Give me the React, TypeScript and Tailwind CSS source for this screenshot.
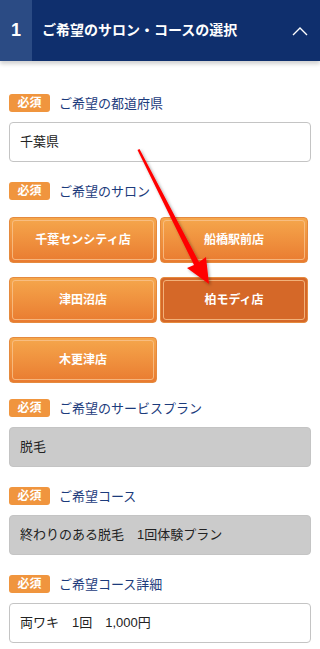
import React from 'react';

const FONT = { fontFamily: '"Liberation Sans", "Noto Sans CJK JP", "Noto Sans", sans-serif' };

function Label({ text }: { text: string }) {
  return (
    <div className="flex items-center gap-[9px] h-[18px]">
      <span className="inline-flex items-center justify-center w-[41px] h-[18px] rounded-[3px] bg-[#f0953e] text-white text-[12px] font-bold leading-none">
        必須
      </span>
      <span className="text-[13px] text-[#1c3b7c] leading-none">{text}</span>
    </div>
  );
}

function Field({ value, gray }: { value: string; gray?: boolean }) {
  return (
    <div
      className={`h-[40px] flex items-center px-[10px] rounded-[4px] border border-[#c4c4c4] text-[13px] text-[#222] ${
        gray ? 'bg-[#cbcbcb]' : 'bg-white'
      }`}
    >
      {value}
    </div>
  );
}

function Shop({ name, active }: { name: string; active?: boolean }) {
  return (
    <div
      className={`h-[46px] rounded-[4px] p-[2px] border border-[#e58a3e] ${
        active ? 'bg-[#d56828]' : 'bg-gradient-to-b from-[#f5a74c] to-[#e97b30]'
      }`}
    >
      <div className="h-full rounded-[3px] border border-[#f9c38d]/80 flex items-center justify-center text-white text-[12px] font-bold">
        {name}
      </div>
    </div>
  );
}

export default function App() {
  return (
    <div className="relative w-[320px] bg-white" style={FONT}>
      <div className="flex h-[61px] bg-[#0f2f6d] shadow-[0_3px_4px_rgba(0,0,0,0.18)]">
        <div className="w-[32px] bg-[#2b4b84] flex items-center justify-center text-white text-[18px] font-bold">1</div>
        <div className="flex-1 flex items-center pl-[10px] text-white text-[14px] font-bold">
          ご希望のサロン・コースの選択
        </div>
        <div className="w-[40px] flex items-center justify-center">
          <svg width="16" height="10" viewBox="0 0 16 10">
            <path d="M1 9 L8 2 L15 9" fill="none" stroke="white" strokeWidth="1.4" />
          </svg>
        </div>
      </div>

      <div className="px-[9px] pt-[33px] pb-[6px] flex flex-col">
        <Label text="ご希望の都道府県" />
        <div className="mt-[10px]">
          <Field value="千葉県" />
        </div>

        <div className="mt-[20px]">
          <Label text="ご希望のサロン" />
        </div>
        <div className="mt-[17px] grid grid-cols-2 gap-x-[3px] gap-y-[14px] w-[299px]">
          <Shop name="千葉センシティ店" />
          <Shop name="船橋駅前店" />
          <Shop name="津田沼店" />
          <Shop name="柏モディ店" active />
          <Shop name="木更津店" />
        </div>

        <div className="mt-[16px]">
          <Label text="ご希望のサービスプラン" />
        </div>
        <div className="mt-[10px]">
          <Field value="脱毛" gray />
        </div>

        <div className="mt-[20px]">
          <Label text="ご希望コース" />
        </div>
        <div className="mt-[10px]">
          <Field value="終わりのある脱毛　1回体験プラン" gray />
        </div>

        <div className="mt-[20px]">
          <Label text="ご希望コース詳細" />
        </div>
        <div className="mt-[10px]">
          <Field value="両ワキ　1回　1,000円" />
        </div>
      </div>

      <svg className="absolute left-0 top-0 pointer-events-none" width="320" height="649" viewBox="0 0 320 649">
        <defs>
          <filter id="sh" x="-20%" y="-20%" width="140%" height="140%">
            <feDropShadow dx="1.5" dy="1.5" stdDeviation="1.5" floodColor="#000" floodOpacity="0.35" />
          </filter>
        </defs>
        <path
          d="M137.5 150 L139.5 149 L199 262 L206 257 L209 284 L187 268 L194 265 Z"
          fill="#ff0000"
          filter="url(#sh)"
        />
      </svg>
    </div>
  );
}
